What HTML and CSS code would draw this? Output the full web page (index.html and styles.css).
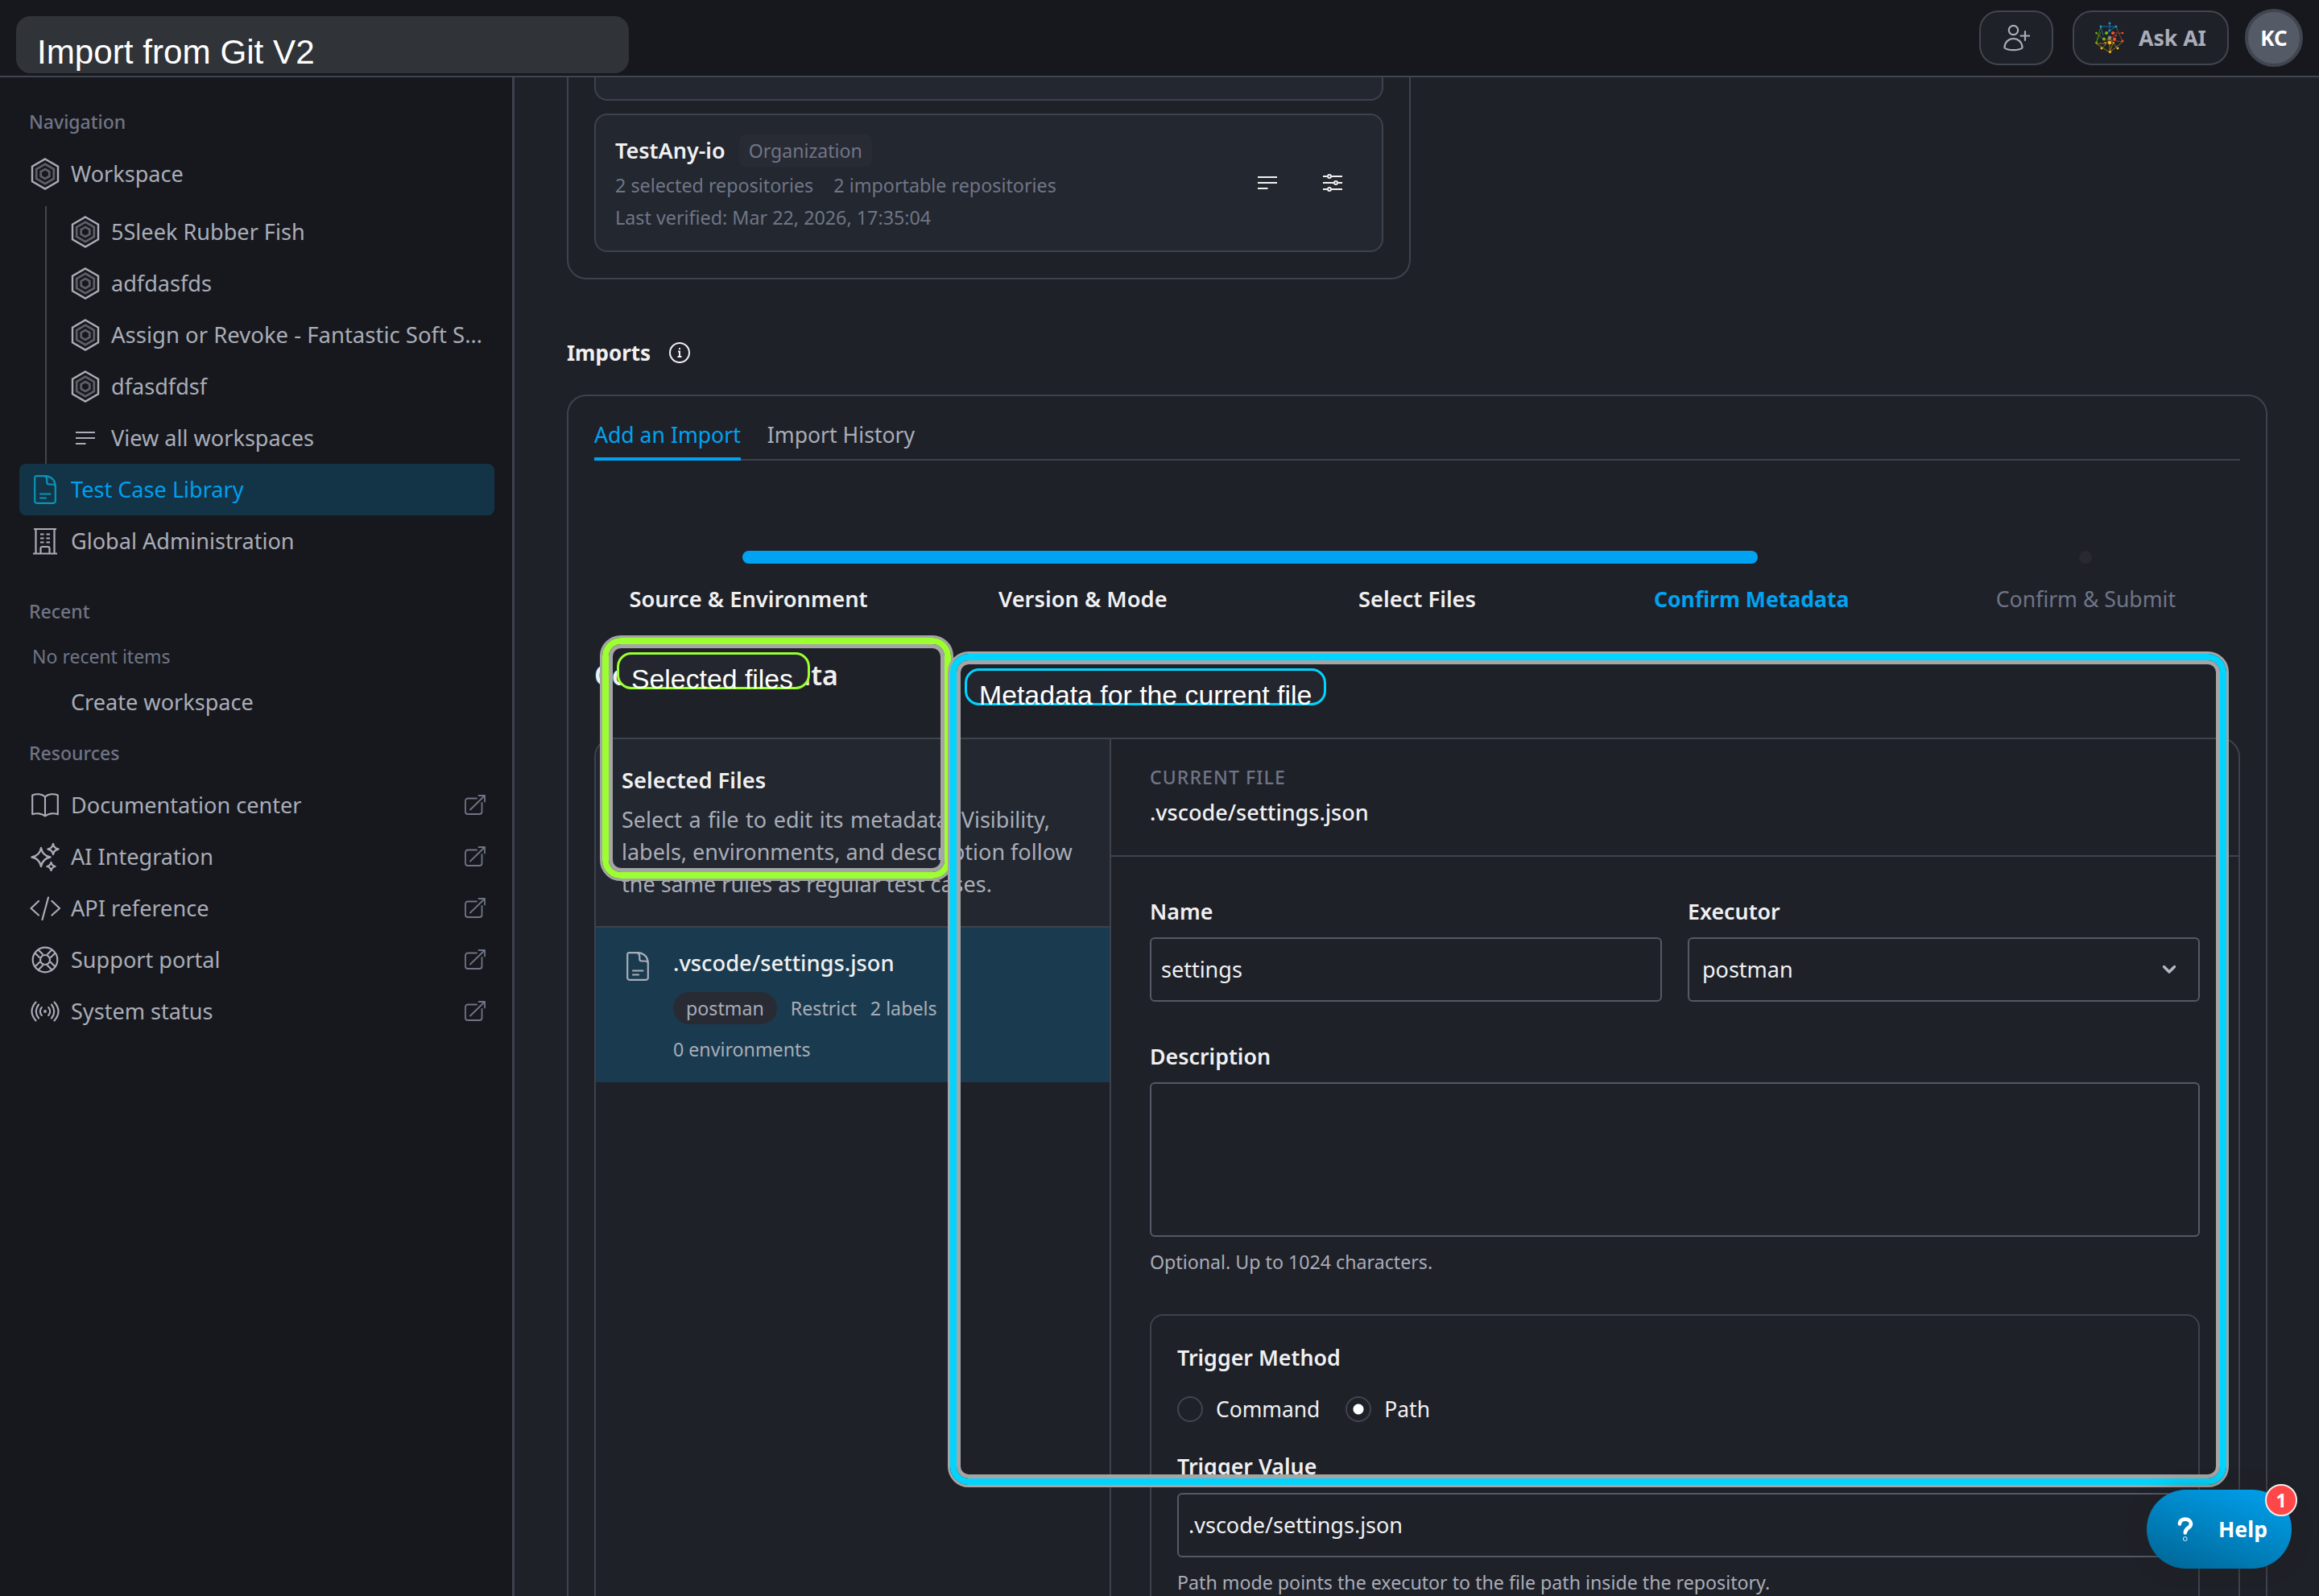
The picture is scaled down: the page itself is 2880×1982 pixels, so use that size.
FILE: index.html
```html
<!DOCTYPE html>
<html lang="en">
<head>
  <meta charset="UTF-8" />
  <meta name="viewport" content="width=device-width, initial-scale=1.0" />
  <title>Import from Git V2</title>
  <link rel="stylesheet" href="styles.css">
</head>
<body>
  <!-- shared icons -->
  <svg class="sprite" width="0" height="0">
    <symbol id="i-hex" viewBox="0 0 36 40" fill="none">
      <path d="M18 1.500 34 10.700v18.600L18 38.500 2 29.300V10.700z" stroke="#a9adb8" stroke-width="2.400"/>
      <path d="M18 7.800 28.800 14v12L18 32.200 7.200 26V14z" stroke="#5c6066" stroke-width="2.800"/>
      <path d="M18 14 23.300 17v6L18 26l-5.300-3v-6z" stroke="#5c6066" stroke-width="2.800"/>
    </symbol>
    <symbol id="i-lines" viewBox="0 0 24 18" fill="none" stroke="currentColor" stroke-width="2">
      <path d="M0 2h24M0 9h24M0 16h12.500"/>
    </symbol>
    <symbol id="i-doc" viewBox="0 0 28 36" fill="none" stroke="currentColor" stroke-width="2.200" stroke-linecap="round" stroke-linejoin="round">
      <path d="M3.200 1.200H15q11 1.500 11.800 12.500V32.300a2.500 2.500 0 0 1-2.500 2.500H3.700a2.500 2.500 0 0 1-2.500-2.500V3.200a2 2 0 0 1 2-2z"/>
      <path d="M13.500 1.200q2.800 1 2.800 5v2.800a2.500 2.500 0 0 0 2.500 2.500h3q4.300 0 5 2M8 23.500h12.500M8 28.500h7"/>
    </symbol>
    <symbol id="i-ext" viewBox="0 0 26 26" fill="none" stroke="currentColor" stroke-width="1.800" stroke-linecap="round" stroke-linejoin="round">
      <path d="M15 4.500H4A3 3 0 0 0 1 7.500V21a3 3 0 0 0 3 3h14.500a3 3 0 0 0 3-3V10M17.500 1H25v7.500M25 1 7 18.500"/>
    </symbol>
  </svg>

  <header class="topbar">
    <div class="page-title">Import from Git V2</div>
    <div class="topbar-actions">
      <button class="top-btn invite">
        <svg width="34" height="34" viewBox="0 0 34 34" fill="none" stroke="currentColor" stroke-width="2.200" stroke-linecap="round" stroke-linejoin="round">
          <circle cx="13.500" cy="7.500" r="5.700"/>
          <path d="M2.500 29.500C2.500 22.500 7.500 18 13.500 18s11 4.500 11 11.500C20 33 7 33 2.500 29.500zM22.500 14.500h11M28 9v11"/>
        </svg>
      </button>
      <button class="top-btn ask">
        <svg width="36" height="40" viewBox="0 0 36 40" fill="none" stroke-width="1">
          <path d="M7 6h19M18 2v6l-2 6M7 6l3 11M26 6l-8 5" stroke="#1173a3"/>
          <path d="M7 6 1 27M1 14l10 8M1 27l6-14" stroke="#4c7a14"/>
          <path d="M26 6l8 19M22 14h12M26 17 14 22l20 3" stroke="#93402b"/>
          <path d="M1 27 18 38 34 25M1 27h12M8 34l6-7 4-6 5 6 5 7M18 38V26l4 1-4 11" stroke="#94751a"/>
          <g fill="#129adb"><circle cx="18" cy="2" r="1.400"/><circle cx="7" cy="6" r="1.400"/><circle cx="26" cy="6" r="1.400"/><circle cx="18" cy="11" r="1.200"/></g>
          <g fill="#7cb70b"><circle cx="14" cy="14" r="2"/><circle cx="11" cy="21.500" r="2"/><circle cx="1.500" cy="14" r="1.300"/><circle cx="1.500" cy="26" r="1.300"/></g>
          <g fill="#f9512a"><circle cx="22" cy="14" r="2"/><circle cx="24" cy="21.500" r="2"/><circle cx="34" cy="14" r="1.300"/><circle cx="34" cy="24" r="1.400"/><circle cx="26" cy="17" r="1"/></g>
          <g fill="#fdb90b"><circle cx="18" cy="26" r="2.200"/><circle cx="8" cy="33" r="1.400"/><circle cx="28" cy="33" r="1.400"/><circle cx="18.500" cy="37.500" r="1.500"/><circle cx="12.500" cy="26" r="1"/><circle cx="23" cy="26" r="1"/></g>
          <circle cx="18" cy="20" r="2.400" fill="#8a8780"/>
        </svg>
        <span>Ask AI</span>
      </button>
      <div class="avatar">KC</div>
    </div>
  </header>

  <div class="shell">
    <nav class="sidebar">
      <h4 class="nav-label">Navigation</h4>
      <a class="nav-item"><span class="ico"><svg width="36" height="40"><use href="#i-hex"/></svg></span>Workspace</a>
      <div class="nav-tree">
        <a class="nav-item"><span class="ico"><svg width="36" height="40"><use href="#i-hex"/></svg></span>5Sleek Rubber Fish</a>
        <a class="nav-item"><span class="ico"><svg width="36" height="40"><use href="#i-hex"/></svg></span>adfdasfds</a>
        <a class="nav-item"><span class="ico"><svg width="36" height="40"><use href="#i-hex"/></svg></span><span class="long">Assign or Revoke - Fantastic Soft S…</span></a>
        <a class="nav-item"><span class="ico"><svg width="36" height="40"><use href="#i-hex"/></svg></span>dfasdfdsf</a>
        <a class="nav-item"><span class="ico"><svg width="24" height="18"><use href="#i-lines"/></svg></span>View all workspaces</a>
      </div>
      <a class="nav-item active"><span class="ico"><svg width="28" height="36"><use href="#i-doc"/></svg></span>Test Case Library</a>
      <a class="nav-item">
        <span class="ico"><svg width="30" height="34" viewBox="0 0 30 34" fill="none" stroke="currentColor" stroke-width="2.200">
          <path d="M1 2h28M0 32.500h30M3.500 2v30M26.500 2v30M9.500 32v-6a2 2 0 0 1 2-2h7a2 2 0 0 1 2 2v6"/>
          <path d="M9 8.500h4.500M16.500 8.500H21M9 13.500h4.500M16.500 13.500H21M9 18.500h4.500M16.500 18.500H21"/>
        </svg></span>Global Administration</a>

      <h4 class="nav-label recent">Recent</h4>
      <p class="nav-empty">No recent items</p>
      <a class="nav-item create">Create workspace</a>

      <h4 class="nav-label resources">Resources</h4>
      <a class="nav-item">
        <span class="ico"><svg width="34" height="30" viewBox="0 0 34 30" fill="none" stroke="currentColor" stroke-width="2.100" stroke-linejoin="round">
          <path d="M17 4.500C13 .7 6 .5 1.200 2.500v23.800C6 24.500 13 25 17 28.500c4-3.500 11-4 15.800-2.200V2.500C28 .5 21 .7 17 4.500zM17 4.500v24"/>
        </svg></span>Documentation center<svg class="ext"><use href="#i-ext"/></svg></a>
      <a class="nav-item">
        <span class="ico"><svg width="36" height="36" viewBox="0 0 36 36" fill="none" stroke="currentColor" stroke-width="2.300" stroke-linejoin="round">
          <path d="M13 7q1.700 9.500 11.500 11.500Q14.700 20.500 13 30 11.300 20.500 1.500 18.500 11.300 16.500 13 7zM28 2q1 5.500 6.500 6.500Q29 9.500 28 15q-1-5.500-6.500-6.500Q27 7.500 28 2zM25.500 25q.9 4 5 5-4.100 1-5 5-.9-4-5-5 4.100-1 5-5z"/>
        </svg></span>AI Integration<svg class="ext"><use href="#i-ext"/></svg></a>
      <a class="nav-item">
        <span class="ico"><svg width="38" height="30" viewBox="0 0 38 30" fill="none" stroke="currentColor" stroke-width="2.200" stroke-linecap="round" stroke-linejoin="round">
          <path d="M11 6 1.500 15l9.500 8.500M27.500 6l9.500 9-9.500 8.500M23 1.500 15.500 29"/>
        </svg></span>API reference<svg class="ext"><use href="#i-ext"/></svg></a>
      <a class="nav-item">
        <span class="ico"><svg width="34" height="34" viewBox="0 0 34 34" fill="none" stroke="currentColor" stroke-width="2.200">
          <circle cx="17" cy="17" r="15.300"/><circle cx="17" cy="17" r="6"/>
          <path d="M10.500 14.500 4.500 8.500M14.500 10.500l-6-6M19.500 10.500l6-6M23.500 14.500l6-6M23.500 19.500l6 6M19.500 23.500l6 6M14.500 23.500l-6 6M10.500 19.500l-6 6"/>
        </svg></span>Support portal<svg class="ext"><use href="#i-ext"/></svg></a>
      <a class="nav-item">
        <span class="ico"><svg width="36" height="26" viewBox="0 0 36 26" fill="none" stroke="currentColor" stroke-width="2.100" stroke-linecap="round">
          <path d="M6.500 1.500q-10 11.500 0 23M10 4.500q-6.500 8.500 0 17M13.800 8q-4 5 0 10M29.500 1.500q10 11.500 0 23M26 4.500q6.500 8.500 0 17M22.200 8q4 5 0 10"/>
          <circle cx="18" cy="13" r="1.900" fill="currentColor" stroke="none"/>
        </svg></span>System status<svg class="ext"><use href="#i-ext"/></svg></a>
    </nav>

    <main class="content">
      <section class="accounts">
        <div class="account-card cut"></div>
        <div class="account-card">
          <div class="account-info">
            <div class="account-name"><strong>TestAny-io</strong><span class="tag">Organization</span></div>
            <div class="account-meta"><span>2 selected repositories</span><span>2 importable repositories</span></div>
            <div class="account-meta">Last verified: Mar 22, 2026, 17:35:04</div>
          </div>
          <div class="account-actions">
            <svg width="24" height="18"><use href="#i-lines"/></svg>
            <svg width="24" height="22" viewBox="0 0 24 22" fill="none" stroke="currentColor" stroke-width="2">
              <path d="M0 3h5.500M10.500 3H24M0 11h13.500M18.500 11H24M0 19h5.500M10.500 19H24"/>
              <circle cx="8" cy="3" r="2"/><circle cx="16" cy="11" r="2"/><circle cx="8" cy="19" r="2"/>
            </svg>
          </div>
        </div>
      </section>

      <h2 class="section-title">Imports
        <svg width="28" height="28" viewBox="0 0 28 28" fill="none" stroke="currentColor" stroke-width="2">
          <circle cx="14" cy="14" r="12"/><path d="M12 12.500h2v6M11.500 19h5M14 8v2"/>
        </svg>
      </h2>

      <section class="imports">
        <div class="tabs">
          <a class="tab selected">Add an Import</a>
          <a class="tab">Import History</a>
        </div>

        <div class="steps">
          <div class="step-track"><div class="step-fill"></div><div class="step-dot"></div></div>
          <div class="step-names">
            <span>Source &amp; Environment</span>
            <span>Version &amp; Mode</span>
            <span>Select Files</span>
            <span class="current">Confirm Metadata</span>
            <span class="todo">Confirm &amp; Submit</span>
          </div>
        </div>

        <h3 class="step-heading">Confirm Metadata</h3>

        <div class="panel">
          <aside class="files">
            <div class="files-head">
              <h4>Selected Files</h4>
              <p>Select a file to edit its metadata. Visibility, labels, environments, and description follow the same rules as regular test cases.</p>
            </div>
            <div class="file">
              <svg width="28" height="36"><use href="#i-doc"/></svg>
              <div>
                <div class="file-name">.vscode/settings.json</div>
                <div class="file-meta">
                  <span class="pill">postman</span><span>Restrict</span><span>2 labels</span><span>0 environments</span>
                </div>
              </div>
            </div>
          </aside>

          <div class="editor">
            <div class="editor-head">
              <div class="overline">CURRENT FILE</div>
              <div class="current-file">.vscode/settings.json</div>
            </div>
            <div class="form">
              <div class="row">
                <div class="field">
                  <label>Name</label>
                  <div class="input">settings</div>
                </div>
                <div class="field">
                  <label>Executor</label>
                  <div class="input select">postman
                    <svg width="18" height="12" viewBox="0 0 18 12" fill="none" stroke="#b4b8c2" stroke-width="3.400" stroke-linecap="round" stroke-linejoin="round"><path d="M2.500 2.500 9 9l6.500-6.500"/></svg>
                  </div>
                </div>
              </div>
              <div class="field description">
                <label>Description</label>
                <div class="input area"></div>
                <div class="hint">Optional. Up to 1024 characters.</div>
              </div>
              <div class="trigger">
                <label>Trigger Method</label>
                <div class="radios">
                  <span class="radio"></span>Command
                  <span class="radio on"></span>Path
                </div>
                <label class="trigger-value">Trigger Value</label>
                <div class="input">.vscode/settings.json</div>
                <div class="hint">Path mode points the executor to the file path inside the repository.</div>
              </div>
            </div>
          </div>
        </div>
      </section>
    </main>
  </div>

  <!-- highlight frames over the page -->
  <div class="frame green"><span>Selected files</span></div>
  <div class="frame cyan"><span>Metadata for the current file</span></div>

  <button class="help">
    <svg width="20" height="30" viewBox="0 0 20 30" fill="none" stroke="#fff" stroke-width="4.600" stroke-linecap="round" stroke-linejoin="round">
      <path d="M3 8.500C3 4.500 6 2.600 10 2.600s7 2.200 7 5.900c0 5-7.200 5-7.200 11"/><circle cx="9.800" cy="27" r=".4"/>
    </svg>
    <span>Help</span>
    <span class="badge">1</span>
  </button>
</body>
</html>
```
FILE: styles.css
```css
* {
    margin: 0;
    padding: 0;
    box-sizing: border-box;
}

body {
    height: 100vh;
    overflow: hidden;
    position: relative;
    background: #1f2129;
    color: #f0f0f1;
    font-family: "Noto Sans", sans-serif;
    font-size: 27px;
    line-height: 40px;
}

button {
    font: inherit;
    color: inherit;
}

svg {
    flex: none;
    display: block;
}

.sprite {
    position: absolute;
}

/* top bar */
.topbar {
    height: 96px;
    display: flex;
    justify-content: space-between;
    background: #17181d;
    border-bottom: 2px solid #41454f;
}

.page-title {
    width: 761px;
    height: 71px;
    margin: 20px 0 0 20px;
    padding: 25px 26px 0;
    border-radius: 18px;
    background: #303338;
    color: #fff;
    font: 42.2px/40px "Liberation Sans", sans-serif;
}

.topbar-actions {
    display: flex;
    align-items: center;
    gap: 24px;
    padding-right: 20px;
}

.top-btn {
    height: 68px;
    display: flex;
    align-items: center;
    justify-content: center;
    background: #1f2129;
    border: 2px solid #41454f;
    border-radius: 24px;
    color: #a9adb8;
}

.invite {
    width: 92px;
}

.ask {
    width: 194px;
    gap: 18px;
    font-size: 26.6px;
    font-weight: 700;
}

.avatar {
    width: 72px;
    height: 72px;
    margin-left: -4px;
    border: 4px solid #41454f;
    border-radius: 50%;
    background: #545a66;
    color: #fff;
    font-size: 26px;
    font-weight: 700;
    line-height: 64px;
    text-align: center;
}

.shell {
    height: calc(100vh - 96px);
    display: flex;
    overflow: hidden;
}

/* sidebar */
.sidebar {
    width: 639px;
    flex: none;
    padding: 35px 22px 0 24px;
    background: #17181d;
    border-right: 3px solid #3e424d;
    color: #a9adb8;
}

.nav-label {
    margin: 0 0 13px 12px;
    font-size: 23px;
    font-weight: 500;
    color: #6f7587;
}

.nav-label.recent {
    margin-top: 35px;
    margin-bottom: 16px;
}

.nav-label.resources {
    margin-top: 11px;
}

.nav-item {
    height: 64px;
    display: flex;
    align-items: center;
    padding: 0 11px 0 12px;
    border-radius: 8px;
    font-size: 27.1px;
    white-space: nowrap;
}

.nav-item .ico {
    width: 40px;
    margin-right: 12px;
    display: flex;
    justify-content: center;
}

.nav-item.active {
    background: #123446;
    color: #009fee;
}

.nav-item.active .ico {
    color: #0b93b5;
}

.nav-item.create {
    padding-left: 64px;
    margin-top: 5px;
}

.nav-item .long {
    font-size: 27.5px;
}

.nav-tree {
    margin: 8px 0 0 32px;
    border-left: 2px solid #41454f;
}

.nav-tree .nav-item {
    padding: 0 0 0 28px;
}

.nav-empty {
    margin-left: 16px;
    font-size: 23px;
    color: #6f7587;
}

.ext {
    width: 26px;
    height: 26px;
    margin-left: auto;
    color: #6f7587;
}

/* accounts list, scrolled under the top bar */
.content {
    flex: 1;
    padding: 0 64px 0 65px;
}

.accounts {
    width: 1048px;
    padding: 0 32px 32px;
    border: 2px solid #3e424d;
    border-top: 0;
    border-radius: 0 0 24px 24px;
}

.account-card {
    height: 172px;
    display: flex;
    align-items: center;
    justify-content: space-between;
    padding: 0 49px 0 24px;
    background: #23272f;
    border: 2px solid #3e424d;
    border-radius: 16px;
}

.account-card.cut {
    height: 29px;
    margin-bottom: 16px;
    border-top: 0;
    border-radius: 0 0 16px 16px;
}

.account-info {
    padding-top: 2px;
}

.account-name {
    display: flex;
    align-items: center;
    gap: 17px;
}

.account-name strong {
    font-weight: 600;
}

.tag {
    padding: 0 12px;
    border-radius: 8px;
    background: #282b34;
    font-size: 23.1px;
    color: #6f7587;
}

.account-meta {
    display: flex;
    gap: 25px;
    margin-top: 3px;
    font-size: 23.3px;
    color: #6f7587;
}

.account-meta + .account-meta {
    margin-top: 0;
}

.account-actions {
    display: flex;
    align-items: center;
    gap: 57px;
}

.section-title {
    display: flex;
    align-items: center;
    gap: 22px;
    margin: 71px 0 32px;
    font-size: 26px;
    font-weight: 700;
}

/* imports */
.imports {
    height: 1600px;
    padding: 28px 32px 0;
    border: 2px solid #3e424d;
    border-radius: 24px;
}

.tabs {
    display: flex;
    gap: 33px;
    border-bottom: 2px solid #3e424d;
    font-size: 26.6px;
}

.tab {
    margin-bottom: -2px;
    padding-bottom: 8px;
    border-bottom: 4px solid transparent;
    color: #a9adb8;
}

.tab.selected {
    color: #00a3f1;
    border-color: #00a3f1;
}

.steps {
    margin: 112px -16px 0;
}

.step-track {
    display: flex;
    justify-content: space-between;
    padding: 0 200px;
}

.step-fill {
    width: 1261px;
    height: 16px;
    border-radius: 8px;
    background: #00a3f1;
}

.step-dot {
    width: 16px;
    height: 16px;
    border-radius: 50%;
    background: #282a2f;
}

.step-names {
    display: grid;
    grid-template-columns: repeat(5, 1fr);
    margin-top: 24px;
    text-align: center;
    font-size: 27.3px;
    font-weight: 600;
}

.step-names .current {
    color: #00a3f1;
    font-weight: 700;
    font-size: 26.6px;
}

.step-names .todo {
    color: #6f7587;
    font-weight: 400;
    font-size: 26.6px;
}

.step-heading {
    margin: 50px 0 54px;
    font-size: 34px;
    line-height: 48px;
    font-weight: 600;
}

.panel {
    height: 1200px;
    display: flex;
    border: 2px solid #3e424d;
    border-radius: 24px;
    overflow: hidden;
}

.files {
    width: 640px;
    flex: none;
    border-right: 2px solid #3e424d;
}

.files-head {
    height: 234px;
    padding: 31px 32px 0;
    background: #23272f;
    border-bottom: 2px solid #3e424d;
}

.files-head h4 {
    margin-bottom: 9px;
    font-size: 27.3px;
    font-weight: 600;
}

.files-head p {
    color: #a9adb8;
}

.files-head p::first-line {
    word-spacing: 1.5px;
}

.file {
    height: 192px;
    display: flex;
    gap: 30px;
    padding: 24px 40px 0 38px;
    background: #1a3b4f;
}

.file svg {
    margin-top: 6px;
    color: #a9adb8;
}

.file-name {
    font-size: 27.3px;
    font-weight: 500;
}

.file-meta {
    display: flex;
    flex-wrap: wrap;
    gap: 11px 17px;
    margin-top: 16px;
    font-size: 23.2px;
    color: #a9adb8;
}

.pill {
    padding: 0 16px;
    border-radius: 20px;
    background: #282b34;
}

.editor {
    flex: 1;
}

.editor-head {
    height: 146px;
    padding: 27px 48px 0;
    border-bottom: 2px solid #3e424d;
}

.overline {
    font-size: 23px;
    font-weight: 500;
    letter-spacing: 1.1px;
    color: #6f7587;
}

.current-file {
    margin-top: 4px;
    font-weight: 500;
}

.form {
    padding: 48px 48px 0;
}

.row {
    display: grid;
    grid-template-columns: 1fr 1fr;
    gap: 32px;
}

label {
    display: block;
    margin-bottom: 12px;
    font-size: 26.8px;
    font-weight: 600;
}

.input {
    height: 80px;
    padding: 0 12px;
    border: 2px solid #545965;
    border-radius: 6px;
    line-height: 76px;
}

.select {
    display: flex;
    align-items: center;
    justify-content: space-between;
    padding: 0 27px 0 16px;
}

.description {
    margin-top: 48px;
}

.area {
    height: 192px;
}

.hint {
    margin-top: 11px;
    font-size: 23.2px;
    color: #a9adb8;
}

.trigger {
    height: 500px;
    margin-top: 45px;
    padding: 32px;
    border: 2px solid #3e424d;
    border-radius: 16px;
}

.radios {
    display: flex;
    align-items: center;
    margin: 24px 0 31px;
    font-size: 26.4px;
}

.radio {
    width: 32px;
    height: 32px;
    margin-right: 16px;
    border: 2px solid #41454f;
    border-radius: 50%;
}

.radio.on {
    margin-left: 32px;
    background: radial-gradient(circle, #fff 6px, transparent 7px);
}

.trigger-value {
    margin-bottom: 13px;
}

/* highlight frames */
.frame {
    position: absolute;
    border: 3px solid #a5a5a5;
    border-radius: 26px;
}

.frame::before {
    content: "";
    position: absolute;
    inset: 0;
    border: 8px solid;
    border-radius: 23px;
}

.frame::after {
    content: "";
    position: absolute;
    inset: 8px;
    border: 5px solid #a5a5a5;
    border-radius: 15px;
}

.frame span {
    position: absolute;
    top: 18px;
    left: 18px;
    height: 46px;
    padding: 13px 0 0 15px;
    border: 3px solid;
    border-radius: 18px;
    background: #23262e;
    font: 33.8px/34px "Liberation Sans", sans-serif;
    white-space: nowrap;
    -webkit-text-fill-color: #fff;
}

.green {
    left: 745px;
    top: 789px;
    width: 439px;
    height: 305px;
    color: #9bff30;
}

.green span {
    width: 240px;
}

.cyan {
    left: 1177px;
    top: 809px;
    width: 1591px;
    height: 1038px;
    color: #00d5ff;
}

.cyan span {
    width: 449px;
}

/* help launcher */
.help {
    position: absolute;
    right: 34px;
    bottom: 34px;
    width: 180px;
    height: 98px;
    display: flex;
    align-items: center;
    gap: 31px;
    padding-left: 38px;
    border: 0;
    border-radius: 49px;
    background: linear-gradient(20deg, #006797 5%, #009de8 90%);
    box-shadow: 0 0 24px rgba(35, 33, 28, 0.4);
    color: #fff;
    font-size: 26.6px;
    font-weight: 700;
}

.badge {
    position: absolute;
    top: -7px;
    right: -7px;
    width: 40px;
    height: 40px;
    border: 2px solid #f3eded;
    border-radius: 50%;
    background: #ff4747;
    font-size: 23px;
    line-height: 36px;
    text-align: center;
}
```
